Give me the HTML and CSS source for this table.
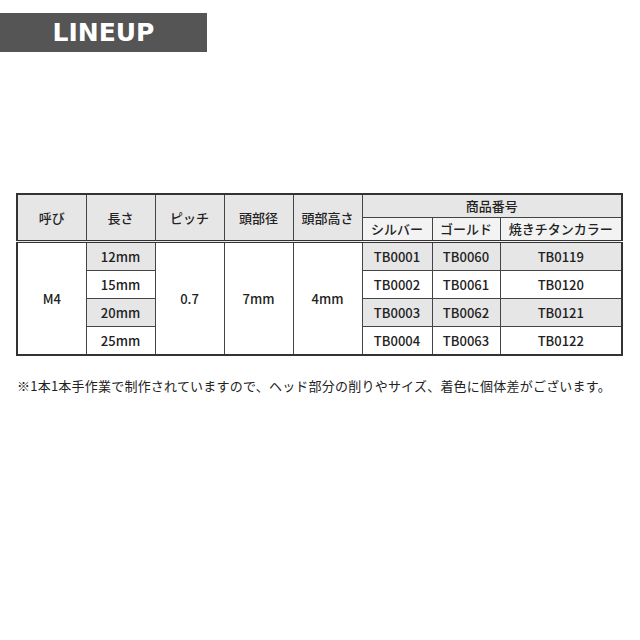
FILE: index.html
```html
<!DOCTYPE html>
<html lang="ja">
<head>
<meta charset="utf-8">
<link rel="stylesheet" href="styles.css">
</head>
<body>
<div class="banner">LINEUP</div>
<table class="spec">
  <colgroup>
    <col class="c1"><col class="c2"><col class="c3"><col class="c4"><col class="c5"><col class="c6"><col class="c7"><col class="c8">
  </colgroup>
  <thead>
    <tr>
      <th rowspan="2">呼び</th>
      <th rowspan="2">長さ</th>
      <th rowspan="2">ピッチ</th>
      <th rowspan="2">頭部径</th>
      <th rowspan="2">頭部高さ</th>
      <th colspan="3">商品番号</th>
    </tr>
    <tr class="sub">
      <th>シルバー</th>
      <th>ゴールド</th>
      <th>焼きチタンカラー</th>
    </tr>
  </thead>
  <tbody>
    <tr class="shade">
      <td rowspan="4" class="plain">M4</td>
      <td>12mm</td>
      <td rowspan="4" class="plain">0.7</td>
      <td rowspan="4" class="plain">7mm</td>
      <td rowspan="4" class="plain">4mm</td>
      <td>TB0001</td><td>TB0060</td><td>TB0119</td>
    </tr>
    <tr>
      <td>15mm</td><td>TB0002</td><td>TB0061</td><td>TB0120</td>
    </tr>
    <tr class="shade">
      <td>20mm</td><td>TB0003</td><td>TB0062</td><td>TB0121</td>
    </tr>
    <tr>
      <td>25mm</td><td>TB0004</td><td>TB0063</td><td>TB0122</td>
    </tr>
  </tbody>
</table>
<p class="note">※1本1本手作業で制作されていますので、ヘッド部分の削りやサイズ、着色に個体差がございます。</p>
</body>
</html>
```

FILE: styles.css
```css
html, body {
  margin: 0;
  padding: 0;
  background: #ffffff;
}
body {
  font-family: "Noto Sans CJK JP", "Noto Sans", sans-serif;
  color: #222222;
}
.banner {
  margin-top: 13px;
  width: 207px;
  height: 39px;
  background: #555555;
  color: #ffffff;
  font-family: "DejaVu Sans", sans-serif;
  font-weight: bold;
  font-size: 25px;
  line-height: 39px;
  text-align: center;
}
.spec {
  margin: 141px 0 0 16px;
  width: 607px;
  border-collapse: collapse;
  table-layout: fixed;
  border: 2px solid #333333;
  font-size: 13px;
  font-weight: 500;
}
.c1, .c2, .c3, .c4, .c5 { width: 69px; }
.c6 { width: 70px; }
.c7 { width: 68px; }
.c8 { width: 122px; }
.spec th, .spec td {
  border: 1px solid #444444;
  text-align: center;
  padding: 0;
  line-height: 16px;
}
.spec th {
  background: #e6e6e6;
  font-weight: 500;
  height: 22px;
}
.spec thead tr.sub th {
  background: #f3f3f3;
}
.spec thead tr:last-child th,
.spec thead th[rowspan] {
  border-bottom: 3px double #333333;
}
.spec td {
  height: 27px;
  background: #ffffff;
}
.spec tr.shade td {
  background: #e6e6e6;
}
.spec tr.shade td.plain {
  background: #ffffff;
}
.note {
  margin: 21px 0 0 17px;
  font-size: 13px;
  line-height: 18px;
  letter-spacing: 0.22px;
  color: #222222;
}
```
